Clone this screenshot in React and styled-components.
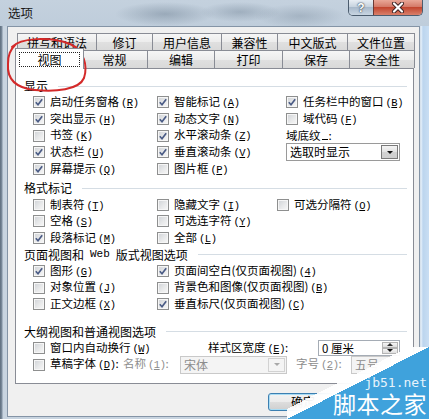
import React from "react";
import styled, { createGlobalStyle } from "styled-components";

const GlobalStyle = createGlobalStyle`
  html, body { margin: 0; padding: 0; background: #c9d5e1; }
  body {
    width: 429px;
    height: 419px;
    overflow: hidden;
    font-family: "Noto Sans CJK SC", "Noto Sans", sans-serif;
    color: #000;
  }
  * { box-sizing: border-box; }
`;

const row1Tabs = [
  ["拼写和语法", 80],
  ["修订", 57],
  ["用户信息", 70],
  ["兼容性", 57],
  ["中文版式", 71],
  ["文件位置", 68],
];
const row2Tabs = [
  ["视图", 65],
  ["常规", 67],
  ["编辑", 68],
  ["打印", 69],
  ["保存", 68],
  ["安全性", 66],
];

// [label, key, checked]
const displayCols = [
  { w: 124, items: [["启动任务窗格", "R", true], ["突出显示", "H", true], ["书签", "K", false], ["状态栏", "U", true], ["屏幕提示", "Q", true]] },
  { w: 129, items: [["智能标记", "A", true], ["动态文字", "N", true], ["水平滚动条", "Z", true], ["垂直滚动条", "V", true], ["图片框", "P", false]] },
];
const formatCols = [
  { w: 124, items: [["制表符", "T", false], ["空格", "S", false], ["段落标记", "M", true]] },
  { w: 120, items: [["隐藏文字", "I", false], ["可选连字符", "Y", false], ["全部", "L", false]] },
  { items: [["可选分隔符", "O", false]] },
];
const pageCols = [
  { w: 124, items: [["图形", "G", true], ["对象位置", "J", false], ["正文边框", "X", false]] },
  { items: [["页面间空白(仅页面视图)", "4", true], ["背景色和图像(仅页面视图)", "B", false], ["垂直标尺(仅页面视图)", "C", true]] },
];

function Mnemonic({ k }) {
  return <Key>(<u>{k}</u>)</Key>;
}

function Check({ label, k, checked, suffix }) {
  return (
    <CheckRow>
      <Box>
        {checked && (
          <svg width="8" height="8" viewBox="0 0 8 8">
            <path d="M0.8 4.2 L3 6.7 L7.2 1.2" fill="none" stroke="#4a5b85" strokeWidth="1.7" />
          </svg>
        )}
      </Box>
      <Text>
        {label}
        <Mnemonic k={k} />
        {suffix}
      </Text>
    </CheckRow>
  );
}

function CheckColumns({ cols, children }) {
  return (
    <Columns>
      {cols.map((c, i) => (
        <Col key={i} $w={c.w}>
          {c.items.map(([l, k, ch]) => (
            <Check key={l} label={l} k={k} checked={ch} />
          ))}
        </Col>
      ))}
      {children}
    </Columns>
  );
}

function Combo({ w, disabled, children }) {
  return (
    <ComboBox $w={w} $disabled={disabled}>
      <ComboText>{children}</ComboText>
      <DropBtn $disabled={disabled}>
        <Arrow $disabled={disabled} />
      </DropBtn>
    </ComboBox>
  );
}

export default function App() {
  return (
    <>
      <GlobalStyle />
      <Window>
        <TitleBar>
          <Title>选项</Title>
          <Caption>
            <HelpBtn>?</HelpBtn>
            <CloseBtn>
              <svg width="14" height="11" viewBox="0 0 14 11">
                <path d="M3 1.5 L11 9.5 M11 1.5 L3 9.5" stroke="#3b2323" strokeWidth="4" strokeLinecap="round" />
                <path d="M3 1.5 L11 9.5 M11 1.5 L3 9.5" stroke="#fff" strokeWidth="2.2" strokeLinecap="round" />
              </svg>
            </CloseBtn>
          </Caption>
        </TitleBar>

        <Client>
          <TabStrip>
            <TabRow $h={17}>
              {row1Tabs.map(([t, w]) => (
                <Tab key={t} $w={w}>{t}</Tab>
              ))}
            </TabRow>
            <TabRow $h={18}>
              {row2Tabs.map(([t, w], i) =>
                i === 0 ? (
                  <ActiveTab key={t} $w={w}>
                    <Focus>{t}</Focus>
                  </ActiveTab>
                ) : (
                  <Tab key={t} $w={w}>{t}</Tab>
                )
              )}
            </TabRow>
          </TabStrip>

          <Panel>
            <Header>显示</Header>
            <CheckColumns cols={displayCols}>
              <Col>
                <Check label="任务栏中的窗口" k="B" checked />
                <Check label="域代码" k="F" />
                <Row>
                  <Text>域底纹<Blank />:</Text>
                </Row>
                <Row>
                  <Combo w={114}>选取时显示</Combo>
                </Row>
              </Col>
            </CheckColumns>

            <Header $top={3}>格式标记</Header>
            <CheckColumns cols={formatCols} />

            <Header>
              页面视图和<Latin>Web</Latin>版式视图选项
            </Header>
            <CheckColumns cols={pageCols} />

            <Header $top={11}>大纲视图和普通视图选项</Header>
            <Columns>
              <Col>
                <Row>
                  <Cell $w={175}>
                    <Check label="窗口内自动换行" k="W" />
                  </Cell>
                  <Cell $w={110}>
                    <Text>样式区宽度<Mnemonic k="E" />:</Text>
                  </Cell>
                  <Spin>
                    <SpinText>0 厘米</SpinText>
                    <SpinBtns>
                      <SpinHalf><Arrow $up /></SpinHalf>
                      <SpinHalf><Arrow /></SpinHalf>
                    </SpinBtns>
                  </Spin>
                </Row>
                <Row>
                  <Cell $w={90}>
                    <Check label="草稿字体" k="D" suffix=":" />
                  </Cell>
                  <Cell $w={57}>
                    <Text $disabled>名称<Mnemonic k="1" />:</Text>
                  </Cell>
                  <Combo w={107} disabled>宋体</Combo>
                  <Cell $w={55} $gap={9}>
                    <Text $disabled>字号<Mnemonic k="2" />:</Text>
                  </Cell>
                  <TextBox>五号</TextBox>
                </Row>
              </Col>
            </Columns>
          </Panel>

          <ButtonRow>
            <Button $default>确定</Button>
            <Button>取消</Button>
          </ButtonRow>
        </Client>

        <Annotation width="100" height="100" viewBox="0 0 100 100">
          <path
            d="M12 47 C 20 38, 50 36, 70 44 C 84 50, 88 66, 84 78 C 79 90, 55 92, 35 90 C 15 88, 7 78, 8 64 C 8 55, 10 50, 16 44"
            fill="none"
            stroke="#d42a2a"
            strokeWidth="2"
            strokeLinecap="round"
          />
        </Annotation>

        <Watermark>
          <WmSmall>jb51.net</WmSmall>
          <WmBig>脚本之家</WmBig>
        </Watermark>
      </Window>
    </>
  );
}

const Window = styled.div`
  position: relative;
  width: 429px;
  height: 419px;
  display: flex;
  flex-direction: column;
  overflow: hidden;
  background: linear-gradient(
    90deg,
    #5d6d7d 0,
    #7f8fa0 2px,
    #c8d4e0 3px,
    #c8d4e0 420px,
    #e6f0fa 421px,
    #bcd5ee 423px,
    #c9def3 100%
  );
`;

const TitleBar = styled.div`
  height: 26px;
  flex: none;
  display: flex;
  align-items: flex-start;
  background:
    radial-gradient(ellipse 50px 12px at 165px 14px, rgba(80, 100, 120, 0.35), transparent),
    radial-gradient(ellipse 40px 10px at 240px 12px, rgba(80, 100, 120, 0.3), transparent),
    radial-gradient(ellipse 45px 12px at 300px 16px, rgba(80, 100, 120, 0.25), transparent),
    linear-gradient(#c4d1de, #bfcddb);
`;

const Title = styled.div`
  padding: 5px 0 0 8px;
  font-size: 12.5px;
  line-height: 15px;
  color: #1a1a1a;
`;

const Caption = styled.div`
  margin-left: auto;
  margin-right: 6px;
  display: flex;
  height: 16px;
  border: 1px solid #4b5c6e;
  border-top: none;
  border-radius: 0 0 5px 5px;
  overflow: hidden;
`;

const HelpBtn = styled.div`
  width: 24px;
  display: grid;
  place-items: center;
  font-family: "Liberation Sans", sans-serif;
  font-weight: bold;
  font-size: 12px;
  color: #fff;
  text-shadow: 0 0 2px #2b3b4c, 0 0 1px #2b3b4c;
  background: linear-gradient(#e8eef4, #c3d0dc 50%, #a9bacb 50%, #c8d5e2);
`;

const CloseBtn = styled.div`
  width: 49px;
  display: grid;
  place-items: center;
  border-left: 1px solid #6b3a35;
  background: linear-gradient(#e9a797, #d27563 50%, #c2462f 50%, #d9806b);
`;

const Client = styled.div`
  flex: 1;
  margin: 0 9px 2px 7px;
  background: #f0f0f0;
  border: 1px solid #8494a6;
  padding: 6px 5px 0 7px;
  display: flex;
  flex-direction: column;
`;

const TabStrip = styled.div`
  margin-left: 2px;
`;

const TabRow = styled.div`
  display: flex;
  height: ${(p) => p.$h}px;
`;

const Tab = styled.div`
  flex: none;
  width: ${(p) => p.$w}px;
  margin-left: -1px;
  &:first-child {
    margin-left: 0;
  }
  border: 1px solid #898c95;
  border-bottom: none;
  background: linear-gradient(#f6f6f6, #ececec 50%, #e0e0e0 51%, #d9d9d9);
  font-size: 12px;
  line-height: 1;
  display: flex;
  align-items: center;
  justify-content: center;
  padding-top: 1px;
`;

const ActiveTab = styled(Tab)`
  width: ${(p) => p.$w + 4}px;
  margin: -2px -2px -1px -2px;
  &:first-child {
    margin-left: -2px;
  }
  background: #fff;
  position: relative;
  z-index: 1;
  padding: 3px 3px 2px;
  align-items: stretch;
  justify-content: stretch;
`;

const Focus = styled.span`
  flex: 1;
  border: 1px dotted #222;
  display: flex;
  align-items: center;
  justify-content: center;
`;

const Panel = styled.div`
  height: 316px;
  flex: none;
  background: #fff;
  border: 1px solid #898c95;
  padding: 9px 6px 0 8px;
`;

const Header = styled.div`
  display: flex;
  align-items: center;
  height: 16px;
  margin-top: ${(p) => p.$top || 0}px;
  font-size: 12px;
  line-height: 1;
  white-space: nowrap;
  &::after {
    content: "";
    flex: 1;
    height: 1px;
    background: #d5dde4;
    margin-left: 10px;
  }
`;

const Latin = styled.span`
  font-family: "Liberation Mono", monospace;
  font-size: 11px;
  margin: 0 6px;
`;

const Columns = styled.div`
  display: flex;
  padding-left: 9px;
`;

const Col = styled.div`
  width: ${(p) => (p.$w ? `${p.$w}px` : "auto")};
  flex: ${(p) => (p.$w ? "none" : 1)};
  display: flex;
  flex-direction: column;
`;

const Row = styled.div`
  height: 16.7px;
  display: flex;
  align-items: center;
`;

const CheckRow = styled(Row)`
  gap: 5px;
`;

const Cell = styled.div`
  width: ${(p) => p.$w}px;
  margin-left: ${(p) => p.$gap || 0}px;
  flex: none;
  display: flex;
  align-items: center;
`;

const Box = styled.span`
  width: 12px;
  height: 12px;
  flex: none;
  border: 1px solid #8e8f8f;
  box-shadow: inset 0 0 0 1px #f6f6f6;
  background: linear-gradient(135deg, #cfd2d6 0%, #e8e9ea 55%, #f8f8f8 100%);
  display: grid;
  place-items: center;
`;

const Text = styled.span`
  font-size: 11.5px;
  line-height: 1;
  white-space: nowrap;
  color: ${(p) => (p.$disabled ? "#8d8d8d" : "#000")};
`;

const Key = styled.span`
  font-family: "Liberation Mono", monospace;
  font-size: 10.5px;
  margin-left: 2px;
  letter-spacing: -0.5px;
`;

const Blank = styled.span`
  display: inline-block;
  width: 6px;
  border-bottom: 1px solid #000;
  margin: 0 1px;
`;

const ComboBox = styled.div`
  width: ${(p) => p.$w}px;
  height: 18px;
  flex: none;
  display: flex;
  align-items: stretch;
  border: 1px solid ${(p) => (p.$disabled ? "#c9c9c9" : "#9a9a9a")};
  background: ${(p) => (p.$disabled ? "#f4f4f4" : "#fff")};
  color: ${(p) => (p.$disabled ? "#8d8d8d" : "#000")};
`;

const ComboText = styled.span`
  flex: 1;
  padding-left: 3px;
  font-size: 12px;
  line-height: 16px;
`;

const DropBtn = styled.span`
  width: 17px;
  margin: 1px;
  border: 1px solid ${(p) => (p.$disabled ? "#d2d2d2" : "#7a7a7a")};
  background: ${(p) =>
    p.$disabled ? "#f4f4f4" : "linear-gradient(#f4f4f4, #e2e2e2 50%, #d2d2d2 51%, #cfcfcf)"};
  display: grid;
  place-items: center;
`;

const Arrow = styled.span`
  width: 0;
  height: 0;
  border-left: 3px solid transparent;
  border-right: 3px solid transparent;
  ${(p) =>
    p.$up
      ? `border-bottom: 3px solid #333;`
      : `border-top: 3px solid ${p.$disabled ? "#a8a8a8" : "#111"};`}
`;

const Spin = styled.div`
  width: 82px;
  height: 16px;
  flex: none;
  display: flex;
  border: 1px solid #a5acb5;
  background: #fff;
`;

const SpinText = styled.span`
  flex: 1;
  padding-left: 3px;
  font-size: 11.5px;
  line-height: 14px;
`;

const SpinBtns = styled.span`
  width: 16px;
  display: flex;
  flex-direction: column;
  margin: 1px;
`;

const SpinHalf = styled.span`
  flex: 1;
  border: 1px solid #b4b4b4;
  background: linear-gradient(#f6f6f6, #dedede);
  display: grid;
  place-items: center;
`;

const TextBox = styled.div`
  width: 40px;
  height: 18px;
  flex: none;
  border: 1px solid #c9c9c9;
  background: #f4f4f4;
  color: #8d8d8d;
  font-size: 12px;
  line-height: 16px;
  padding-left: 3px;
`;

const ButtonRow = styled.div`
  display: flex;
  justify-content: flex-end;
  gap: 6px;
  padding-top: 9px;
`;

const Button = styled.div`
  width: 70px;
  height: 18px;
  border: 1px solid ${(p) => (p.$default ? "#3c7fb1" : "#707070")};
  border-radius: 3px;
  background: linear-gradient(#f2f2f2, #ebebeb 50%, #dddddd 51%, #cfcfcf);
  box-shadow: ${(p) => (p.$default ? "inset 0 0 0 1px #a9dcf4" : "inset 0 0 0 1px #fcfcfc")};
  font-size: 12px;
  line-height: 16px;
  text-align: center;
`;

const Annotation = styled.svg`
  position: absolute;
  left: 0;
  top: 0;
  pointer-events: none;
`;

const Watermark = styled.div`
  position: absolute;
  right: 0;
  bottom: 0;
  width: 142px;
  height: 72px;
  background: linear-gradient(
    to bottom right,
    transparent 43%,
    rgba(255, 255, 255, 0.92) 43%,
    #fff 50%,
    #3fa2dc 50%
  );
  display: flex;
  flex-direction: column;
  align-items: flex-end;
  padding: 29px 2px 0 0;
  color: #fff;
`;

const WmSmall = styled.div`
  font-family: "DejaVu Sans Mono", monospace;
  font-size: 13px;
  line-height: 14px;
  color: #e6f3fb;
`;

const WmBig = styled.div`
  font-size: 23px;
  line-height: 24px;
  margin-top: 1px;
  letter-spacing: 0.5px;
`;
